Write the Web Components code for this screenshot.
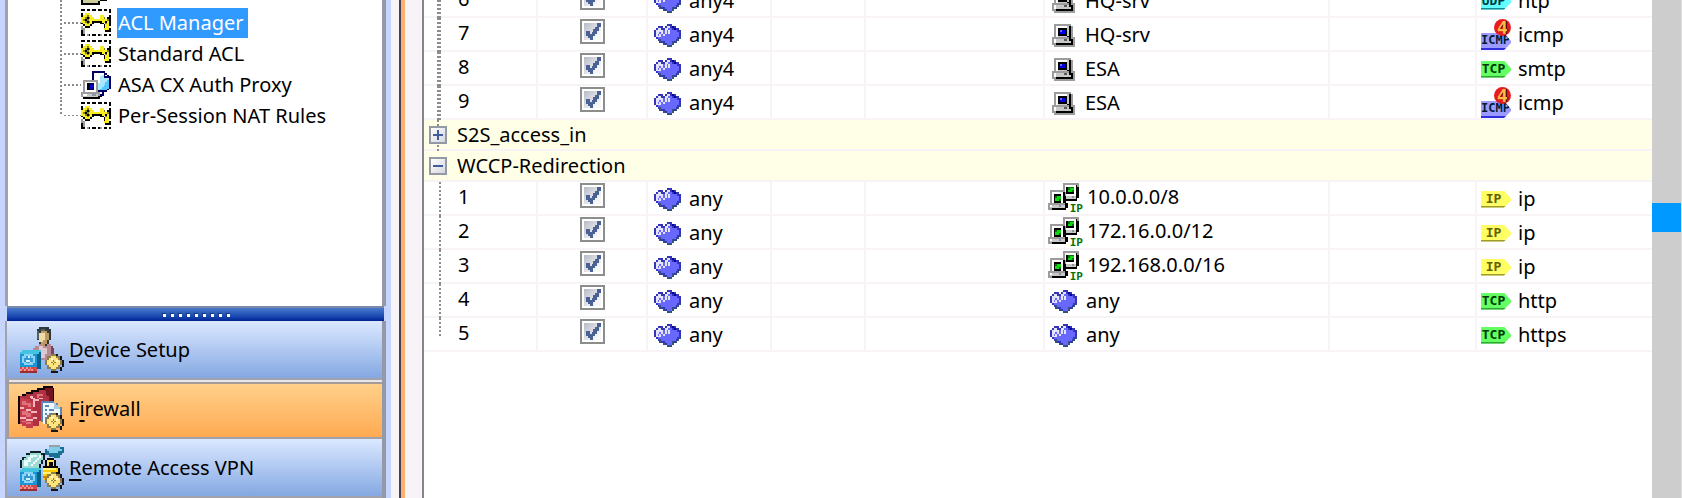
<!DOCTYPE html>
<html lang="en">
<head>
<meta charset="utf-8">
<title>ACL Manager</title>
<style>
  html, body {
    margin: 0;
    height: 100%;
  }

  body {
    overflow: hidden;
    background: #f7f3f7;
    color: #000;
    font-family: "Noto Sans", "DejaVu Sans", sans-serif;
    font-size: 20px;
    line-height: 24px;
  }
</style>
</head>
<body>
<asdm-window>
  <nav-tree slot="tree">
    <tree-item icon="pages"></tree-item>
    <tree-item icon="key" selected>ACL Manager</tree-item>
    <tree-item icon="key">Standard ACL</tree-item>
    <tree-item icon="proxy">ASA CX Auth Proxy</tree-item>
    <tree-item icon="key" last>Per-Session NAT Rules</tree-item>
  </nav-tree>
  <nav-button slot="nav" icon="device"><u>D</u>evice Setup</nav-button>
  <nav-button slot="nav" icon="firewall" active>F<u>i</u>rewall</nav-button>
  <nav-button slot="nav" icon="vpn"><u>R</u>emote Access VPN</nav-button>
  <acl-table slot="main"></acl-table>
  <scroll-track slot="main"></scroll-track>
</asdm-window>

<script>
// Small icons are kept as pixel maps, one character per pixel.
const PALETTE = {
  k: '#000000', w: '#ffffff', g: '#9c9c9c', s: '#c8c8c8', d: '#5a5a5a',
  y: '#f7ee21', o: '#8a8420', b: '#3434b8', B: '#0000a0', p: '#6868ff',
  l: '#e4e4ff', t: '#31527b', n: '#0000e8', v: '#000063', c: '#a8e8ff',
  C: '#50c8ff', G: '#10d810', e: '#087008', i: '#cecb9c', m: '#8c96a0'
};

const PIXELS = {
  cloud: {
    width: 27, height: 23, rows: [
      '.......bbb.....',
      '..bbb.bllbBb...',
      '.bllbbllppbBbb.',
      'bllllplplppppbb',
      'bllplplplpppppb',
      'blplplppppppppb',
      'blllppppppppppb',
      '.bpppppppppppbt',
      '..btppppppppbt.',
      '...tbbpppptbt..',
      '.....tbpppt....',
      '.......ttt.....'
    ]
  },
  host: {
    width: 23, height: 23, rows: [
      '.ggggggggg..',
      '.gwwwwwwskg.',
      '.gwkkkkkskg.',
      '.gwkpnnkskg.',
      '.gwknnnkskg.',
      '.gwkkkkkskg.',
      '.gwssssskkg.',
      'gggggggggkgg',
      'gwssssddskkg',
      'gwsssssssskg',
      'ggkkkkkkkkkg',
      '.ggggggggggg'
    ]
  },
  network: {
    width: 33, height: 29, rows: [
      '........ggggggggg.',
      '........gwwwwwwkg.',
      '........gwkeeewkk.',
      '........gwkeGGwkk.',
      '.ggggggggwkGGewkk.',
      '.gwwwwwwkgkkkkwkk.',
      '.gwkkkkwkgwwwwwkk.',
      '.gwkeGGwkksssmskk.',
      '.gwkGGGwkksssssk..',
      '.gwkGGewkkkkkkkk..',
      '.gwkkkkwkk........',
      'gggggggggkk.......',
      'gwssssmsskk.......',
      'gsssssssskk.......',
      'ggkkkkkkkk........',
      '..................'
    ]
  },
  key: {
    width: 30, height: 27, rows: [
      'kk.kk.kk.kk.kk.k',
      '...............k',
      'k.yyy...........',
      'kyyoyy....yy...k',
      'yyokoyy...yyo.kk',
      'yokoyyyyyyyyyyok',
      'yyokoykkkkkyykyk',
      'kyyoyyk...kk.oyk',
      '.kyyyk......kyyk',
      'g.kkk.......kyy.',
      'gg..........yyyk',
      'kg...........kkk',
      'kg..............',
      'kk.gk.kk.kg.kk.k'
    ]
  },
  proxy: {
    width: 30, height: 28, rows: [
      '......vvvvvvv...',
      '......vwwwwwvv..',
      '......vwwwwcvwv.',
      '......vwwwccvvvv',
      '......vwwwcccccv',
      '.ggggggggwccccCv',
      '.gwwwwwwgwcccCCv',
      '.gwkkvvwgccccCCv',
      '.gwkvnnwgcccCCCv',
      '.gwkvnvwgccCCCCv',
      '.gwkkvvwgcCCCCv.',
      '.gwwwwwwgvvvvv..',
      'gggggggggg.v....',
      'gwwsssmmsgvv....',
      'gsssssssskk.....',
      '.kkkkkkkkk......'
    ]
  },
  pages: {
    width: 30, height: 27, rows: [
      '................',
      '.kkkkkkkkkk.....',
      '.kiiiiiiiik.....',
      '.kiiiiiiiikkkk..',
      '.kiiiiiiiikwwk..',
      'kiiiiiiiiikwwk..',
      'kiiiiiiiiikwwk..',
      'kiiiiiiiiikwwk..',
      'kiiiiiiiiikwwk..',
      'kiiiiiiiiikwwk..',
      'kiiiiiiiiikwwk..',
      'kiiiiiiiiikkkk..',
      'kiiiiiiiik......',
      'kkkkkkkkkk......'
    ]
  }
};

const GEAR = `
  <path d="M18 14h3v1h2v2h1v4h-1v2h-2v1h-4v-1h5v-2h1v-4h-1v-2h-3z" fill="#17151a"/>
  <path d="M17 14h3v1h2v2h1v3h-1v2h-2v1h-3v-1h-2v-2h-1v-3h1v-2h2z" fill="#8c7d49"/>
  <path d="M17 15h3v1h1v1h1v3h-1v1h-1v1h-3v-1h-1v-1h-1v-3h1v-1h1z" fill="#ffe37b"/>
  <path d="M17 16h1v1h-1zM20 17h1v1h-1zM16 18h1v1h-1z" fill="#fffbd6"/>
  <path d="M18 17h1v1h1v1h-1v1h-1v-1h-1v-1h1z" fill="#8c7d39"/>
  <path d="M18 18h1v1h-1z" fill="#fff"/>`;

const APPLIANCE = `
  <path d="M2 12h10v10h-2v-8h1v-1H2z" fill="#08618c"/>
  <path d="M2 12h10v1h-1v1H1v-1h1z" fill="#42c3de"/>
  <path d="M1 14h9v7H1z" fill="#1896d6"/>
  <path d="M3 14h5v1h1v4H8v1H3v-1H2v-4h1z" fill="#8cd3f7"/>
  <path d="M4 15h3v1h1v2H7v1H4v-1H3v-2h1z" fill="#319ad6"/>
  <path d="M5 15h1v1H5zM4 17h2v1H4zM6 18h1v1H6z" fill="#d6f3ff"/>
  <path d="M1 21h9v3H1z" fill="#d6494a"/>
  <path d="M1 22h1v1H1zM3 22h1v1H3zM5 22h1v1H5zM7 22h1v1H7zM2 21h1v1H2zM4 21h1v1H4zM6 21h1v1H6z" fill="#ef9694"/>
  <path d="M1 23h9v1H1z" fill="#9c2c31"/>`;

const DRAWINGS = {
  device: `
    <path d="M11 0h5v1h1v6h-1v2h-1v1h-3V9h-1V7h-1V1h1z" fill="#31383a"/>
    <path d="M10 2h1v4h-1zM12 1h2v1h-2z" fill="#526163"/>
    <path d="M11 3h1V2h3v1h1v4h-1v2h-1v1h-2V8h-1z" fill="#bd9a63"/>
    <path d="M11 3h3v4h-1v1h-2z" fill="#efdba5"/>
    <path d="M9 10h2V9h1v1h3V9h2v1h1v6h-1v1h-5v-4H8v-2h1z" fill="#b58a94"/>
    <path d="M12 10h1v1h2v3h-1v2h-2v-4h-1v-2z" fill="#dec7ce"/>
    <path d="M17 10h1v1h1v4h-1v1h-1z" fill="#7b4552"/>`,
  firewall: `
    <path d="M0 5h2V4h2V3h3V2h3V1h3V0h5v1h1v15h-2v1h-3v1h-3v2h-2v1H7v1H4v-1H2v-1H0z" fill="#100408"/>
    <path d="M1 5h3V4h4V3h3V2h3V1h4v16h-3v1h-4v3H8v1H4v-1H2v-1H1z" fill="#ad3142"/>
    <path d="M1 6h2v1h3v1h2v14H4v-1H2v-1H1z" fill="#c63c4a"/>
    <path d="M14 1h4v8h-2V5h-1z" fill="#731420"/>
    <path d="M2 8h2v1h3v2H5v-1H2zM2 13h3v1h2v2H4v-1H2zM2 18h2v1h3v1H4v-1H2zM10 4h3v1h-2v1h-1z" fill="#de717b"/>
    <path d="M1 11h2v1h4v1h3v1H7v-1H4v-1H1zM1 16h3v1h4v-1h2v1H8v1H4v-1H1zM6 5h2v1h1v1h2V6h2v1h-2v1H9v3H8V7H7V6H6z" fill="#f7b6bd"/>
    <path d="M12 8h7v1h2v2h2v8H12z" fill="#5a86b5"/>
    <path d="M13 9h6v1h1v2h2v8h-9z" fill="#eff7ff"/>
    <path d="M19 9h1v1h1v1h1v1h-3z" fill="#a5cbe7"/>
    <path d="M14 10h2v1h-2zM14 12h1v1h-1zM16 12h3v1h-3zM14 14h1v1h-1zM16 14h3v1h-3zM14 16h1v1h-1z" fill="#5a86b5"/>`,
  vpn: `
    <path d="M16 0h6v1h2v3h-1v1h-1v2h-3V6h-3V5h-2V2h2z" fill="#187194"/>
    <path d="M16 1h6v1h1v1h-2v1h-5V3h-1V2h1z" fill="#84cbe7"/>
    <path d="M16 0h6v1h-6z" fill="#94a2a5"/>
    <path d="M6 3h6v1h2v4h-1v2h-1v2H1V8h1V6h2V4h2z" fill="#102028"/>
    <path d="M6 4h6v1h1v3h-1v2h-1v2H2V8h1V7h1V5h2z" fill="#9cdbd6"/>
    <path d="M6 5h4v1H8v1H7v2H5v2H3V8h2V6h1z" fill="#e7ffff"/>
    <path d="M11 5h1v2h-1v1h-1v1H9v1H8v1H7v-1h1V9h1V8h1V7h1z" fill="#fff"/>
    <path d="M15 7h4v1h1v3h1v1h1v6h-9v-7h1V8h1z" fill="#080800"/>
    <path d="M15 8h4v3h-1V9h-2v2h-1z" fill="#ffe35a"/>
    <path d="M13 12h8v6h-8z" fill="#ffcb00"/>
    <path d="M13 12h7v1h-7zM13 14h7v1h-7z" fill="#fff37b"/>
    <path d="M13 16h8v1h-8z" fill="#c68600"/>`
};

function pixelIcon(name) {
  const { width, height, rows } = PIXELS[name];
  let rects = '';
  rows.forEach((row, y) => {
    // runs of one colour become one rect
    for (const run of row.matchAll(/([^.])\1*/g)) {
      rects += `<rect x="${run.index}" y="${y}" width="${run[0].length}" height="1" fill="${PALETTE[run[1]]}"/>`;
    }
  });
  return `<svg width="${width}" height="${height}" viewBox="0 0 ${rows[0].length} ${rows.length}" preserveAspectRatio="none" shape-rendering="crispEdges" aria-hidden="true">${rects}</svg>`;
}

function largeIcon(name) {
  const front = name === 'firewall' ? '' : APPLIANCE;
  return `<svg width="46" height="46" viewBox="0 0 24 24" shape-rendering="crispEdges" aria-hidden="true">${DRAWINGS[name]}${front}${GEAR}</svg>`;
}

class PixelIcon extends HTMLElement {
  constructor() {
    super();
    this.attachShadow({ mode: 'open' });
  }

  connectedCallback() {
    const name = this.getAttribute('name');
    this.shadowRoot.innerHTML = `
      <style>
        :host { display: inline-block; position: relative; flex: none; }
        svg { display: block; }
        span {
          position: absolute;
          right: -2px;
          bottom: -2px;
          color: #087008;
          font: bold 11px/11px "DejaVu Sans Mono", monospace;
        }
      </style>
      ${DRAWINGS[name] ? largeIcon(name) : pixelIcon(name)}
      ${name === 'network' ? '<span>IP</span>' : ''}
    `;
  }
}

class AsdmWindow extends HTMLElement {
  constructor() {
    super();
    this.attachShadow({ mode: 'open' });
    this.shadowRoot.innerHTML = `
      <style>
        :host { display: flex; height: 100vh; }
        .side {
          flex: 0 0 391px;
          box-sizing: border-box;
          display: flex;
          flex-direction: column;
          padding: 0 5px;
          background: #c5d5fd;
        }
        .tree {
          flex: 1;
          min-height: 0;
          overflow: hidden;
          background: #fff;
          border: solid #a2a2ad;
          border-width: 0 4px 0 3px;
          border-right-color: #9598a6;
        }
        .grip {
          flex: none;
          display: flex;
          justify-content: center;
          align-items: center;
          gap: 4px;
          margin: 0 2px;
          height: 13px;
          border-top: 2px solid #7b8ba5;
          background: linear-gradient(#4a79ce, #1c4cb2 60%, #0a30a0 88%, #00208c);
        }
        .grip i {
          width: 4px;
          height: 4px;
          box-sizing: border-box;
          background: #fff;
          border: solid #15397f;
          border-width: 1px 0 0 1px;
        }
        nav { flex: none; border: solid #a2a2ad; border-width: 0 4px 0 2px; border-right-color: #9598a6; }
        .divider {
          flex: 0 0 6px;
          margin: 0 17px 0 8px;
          box-sizing: border-box;
          border-left: 2px solid #4a3c5a;
          background: #f7b26b;
        }
        main {
          flex: 1;
          min-width: 0;
          display: flex;
          overflow: hidden;
          background: #fff;
          border-left: 2px solid #84868f;
        }
      </style>
      <div class="side">
        <div class="tree"><slot name="tree"></slot></div>
        <div class="grip">${'<i></i>'.repeat(9)}</div>
        <nav><slot name="nav"></slot></nav>
      </div>
      <div class="divider"></div>
      <main><slot name="main"></slot></main>
    `;
  }
}

class NavTree extends HTMLElement {
  constructor() {
    super();
    this.attachShadow({ mode: 'open' });
    this.shadowRoot.innerHTML = `
      <style>
        /* scrolled part way through a row */
        :host { display: block; margin-top: -24px; padding-left: 52px; }
      </style>
      <slot></slot>
    `;
  }
}

class TreeItem extends HTMLElement {
  constructor() {
    super();
    this.attachShadow({ mode: 'open' });
  }

  connectedCallback() {
    this.shadowRoot.innerHTML = `
      <style>
        :host { display: flex; align-items: center; height: 31px; }
        .branch {
          align-self: stretch;
          width: 21px;
          background:
            repeating-linear-gradient(#8c8c8c 0 2px, #fff 2px 4px) 0 0 / 2px 100% no-repeat,
            repeating-linear-gradient(90deg, #8c8c8c 0 2px, #fff 2px 4px) 0 15px / 100% 2px no-repeat;
        }
        :host([last]) .branch { height: 16px; align-self: flex-start; }
        a {
          margin-left: 6px;
          padding: 3px 5px 3px 1px;
          color: inherit;
          text-decoration: none;
        }
        :host([selected]) a { background: #319aff; color: #fff; }
        pixel-icon { width: 30px; }
      </style>
      <span class="branch"></span>
      <pixel-icon name="${this.getAttribute('icon')}"></pixel-icon>
      ${this.textContent ? '<a href="#"><slot></slot></a>' : ''}
    `;
  }
}

class NavButton extends HTMLElement {
  constructor() {
    super();
    this.attachShadow({ mode: 'open' });
  }

  connectedCallback() {
    this.shadowRoot.innerHTML = `
      <style>
        :host { display: block; }
        button {
          display: flex;
          align-items: center;
          gap: 5px;
          width: 100%;
          height: 59px;
          margin: 0;
          padding: 0 11px;
          border: 0;
          border-bottom: 2px solid #a2a2ad;
          background: linear-gradient(#dbe8ff, #84a8e2);
          color: inherit;
          font: inherit;
          text-align: left;
        }
        :host([active]) button {
          padding-left: 9px;
          border-left: 2px solid #a59a94;
          background: linear-gradient(#e6e6ef 0 2px, #a59a94 2px 4px, #ffd08a 4px, #ffaa52);
        }
        ::slotted(u) {
          text-decoration-thickness: 2px;
          text-underline-offset: 4px;
          text-decoration-skip-ink: none;
        }
      </style>
      <button type="button">
        <pixel-icon name="${this.getAttribute('icon')}"></pixel-icon>
        <span><slot></slot></span>
      </button>
    `;
  }
}

class RuleCheck extends HTMLElement {
  constructor() {
    super();
    this.attachShadow({ mode: 'open' });
  }

  connectedCallback() {
    this.shadowRoot.innerHTML = `
      <style>
        :host { display: inline-grid; width: 25px; height: 25px; }
        input, svg { grid-area: 1 / 1; margin: 0; }
        input {
          appearance: none;
          width: 25px;
          height: 25px;
          border: 2px solid #8c8e8c;
          padding: 2px;
          background: linear-gradient(135deg, #b5bac6, #f7f7f7 80%) content-box #fff;
        }
        svg { place-self: center; pointer-events: none; visibility: hidden; }
        input:checked + svg { visibility: visible; }
      </style>
      <input type="checkbox" checked aria-label="${this.getAttribute('label')}">
      <svg width="17" height="17" viewBox="0 0 9 9" shape-rendering="crispEdges" aria-hidden="true">
        <path d="M7 0h2v2H8v2H7v2H6v1H5v2H3V8H2V7H1V4h2v2h1V5h1V3h1V2h1z" fill="#4a6194"/>
      </svg>
    `;
  }
}

class ServiceBadge extends HTMLElement {
  constructor() {
    super();
    this.attachShadow({ mode: 'open' });
  }

  connectedCallback() {
    const kind = this.getAttribute('kind');
    const colors = {
      TCP: ['#63ff63', '#31a631', '#003800'],
      UDP: ['#63ffff', '#108a94', '#003c42'],
      IP: ['#ffff63', '#9c9a31', '#636100'],
      ICMP: ['#9c9aff', '#3130de', '#001c31']
    };
    const [fill, edge, ink] = colors[kind];
    this.shadowRoot.innerHTML = `
      <style>
        :host {
          display: inline-block;
          position: relative;
          flex: none;
          width: 30px;
          color: ${ink};
          font: bold 13px/15px "DejaVu Sans Mono", monospace;
        }
        .tag {
          height: 15px;
          padding-right: 5px;
          border-bottom: 2px solid ${edge};
          background: ${fill};
          clip-path: polygon(0 0, 23px 0, 30px 8px, 30px 10px, 23px 100%, 0 100%);
          text-align: center;
        }
        .wide { padding: 0; font-size: 12px; text-align: left; }
        .version {
          position: absolute;
          right: 0;
          bottom: 14px;
          width: 17px;
          height: 17px;
          border-radius: 50%;
          background: #e71c21;
          color: #ffba42;
          font-size: 18px;
          line-height: 17px;
          text-align: center;
          text-shadow: 1px 0 #300;
        }
      </style>
      <div class="tag ${kind === 'ICMP' ? 'wide' : ''}">${kind}</div>
      ${kind === 'ICMP' ? '<div class="version">4</div>' : ''}
    `;
  }
}

const ACLS = [
  {
    open: true, partial: true,
    rules: [
      [6, 'any4', 'host', 'HQ-srv', 'UDP', 'ntp'],
      [7, 'any4', 'host', 'HQ-srv', 'ICMP', 'icmp'],
      [8, 'any4', 'host', 'ESA', 'TCP', 'smtp'],
      [9, 'any4', 'host', 'ESA', 'ICMP', 'icmp']
    ]
  },
  { name: 'S2S_access_in', open: false, rules: [] },
  {
    name: 'WCCP-Redirection', open: true,
    rules: [
      [1, 'any', 'network', '10.0.0.0/8', 'IP', 'ip'],
      [2, 'any', 'network', '172.16.0.0/12', 'IP', 'ip'],
      [3, 'any', 'network', '192.168.0.0/16', 'IP', 'ip'],
      [4, 'any', 'cloud', 'any', 'TCP', 'http'],
      [5, 'any', 'cloud', 'any', 'TCP', 'https']
    ]
  }
];

class AclTable extends HTMLElement {
  constructor() {
    super();
    this.attachShadow({ mode: 'open' });
    this.shadowRoot.innerHTML = `
      <style>
        :host { display: block; flex: 1; min-width: 0; }
        table {
          width: 100%;
          margin-top: -16px;
          border-spacing: 0;
          table-layout: fixed;
        }
        td, th { padding: 0; text-align: left; font-weight: normal; }
        td { height: 32px; border: solid #f7f3f7; border-width: 0 2px 2px 0; vertical-align: top; }
        td:last-child { border-right: 0; }
        td.no { position: relative; padding-left: 34px; line-height: 30px; }
        td.no::before {
          content: "";
          position: absolute;
          left: 15px;
          top: 0;
          bottom: -2px;
          width: 2px;
          background: repeating-linear-gradient(#8c8c8c 0 2px, transparent 2px 4px);
        }
        .partial td.no::before { left: 13px; width: 4px; }
        .last td.no::before { bottom: 14px; }
        td.check { padding-top: 1px; height: 31px; text-align: center; }
        rule-check { vertical-align: top; }
        .cell { display: flex; align-items: center; box-sizing: border-box; height: 32px; padding-top: 2px; }
        .source { padding-left: 6px; gap: 8px; }
        .host { padding-left: 7px; gap: 10px; }
        .network { padding-left: 3px; gap: 6px; height: 30px; padding-top: 0; }
        .cloud { padding-left: 5px; gap: 9px; }
        .service { padding-left: 4px; gap: 7px; }
        .ICMP service-badge { align-self: flex-end; }
        th {
          position: relative;
          height: 29px;
          padding-left: 33px;
          border-bottom: 2px solid #f7f3f7;
          background: #ffffe7;
        }
        th button {
          position: absolute;
          left: 5px;
          top: 6px;
          width: 18px;
          height: 18px;
          padding: 0;
          border: 2px solid #949aa5;
          background:
            linear-gradient(#425d9c, #425d9c) center / 10px 2px no-repeat,
            var(--stem, none) center / 2px 10px no-repeat,
            linear-gradient(135deg, #fff, #d6d7de);
        }
        .closed button { --stem: linear-gradient(#425d9c, #425d9c); }
        .closed th::before, .closed th::after {
          content: "";
          position: absolute;
          left: 13px;
          width: 2px;
          height: 6px;
          background: repeating-linear-gradient(#8c8c8c 0 2px, transparent 2px 4px);
        }
        .closed th::before { top: 0; }
        .closed th::after { top: 25px; height: 10px; }
      </style>
      <table aria-label="Access rules">
        <colgroup>
          <col style="width: 114px"><col style="width: 110px"><col style="width: 124px"><col style="width: 94px">
          <col style="width: 179px"><col style="width: 285px"><col style="width: 147px"><col>
        </colgroup>
        <tbody></tbody>
      </table>
    `;
    this.shadowRoot.querySelector('tbody').innerHTML = ACLS.map(acl => this.group(acl)).join('');
  }

  group(acl) {
    const header = acl.name ? `
      <tr class="${acl.open ? 'open' : 'closed'}">
        <th colspan="8"><button type="button" aria-label="Toggle ${acl.name}"></button>${acl.name}</th>
      </tr>` : '';
    const rows = acl.rules.map((rule, i) => {
      const last = !acl.partial && i === acl.rules.length - 1;
      return this.row(rule, `${acl.partial ? 'partial' : ''} ${last ? 'last' : ''}`);
    });
    return header + rows.join('');
  }

  row([no, source, icon, destination, kind, service], classes) {
    return `
      <tr class="${classes}">
        <td class="no">${no}</td>
        <td class="check"><rule-check label="Enable rule ${no}"></rule-check></td>
        <td><div class="cell source"><pixel-icon name="cloud"></pixel-icon>${source}</div></td>
        <td></td>
        <td></td>
        <td><div class="cell ${icon}"><pixel-icon name="${icon}"></pixel-icon>${destination}</div></td>
        <td></td>
        <td><div class="cell service ${kind}"><service-badge kind="${kind}"></service-badge>${service}</div></td>
      </tr>`;
  }
}

class ScrollTrack extends HTMLElement {
  constructor() {
    super();
    this.attachShadow({ mode: 'open' });
    this.shadowRoot.innerHTML = `
      <style>
        :host {
          display: grid;
          flex: 0 0 30px;
          box-sizing: border-box;
          grid-template-rows: 203fr 29px 266fr;
          border-right: 1px solid #dedede;
          background: #cdcdcd;
        }
        div { grid-row: 2; background: #0099ff; }
      </style>
      <div></div>
    `;
  }
}

customElements.define('pixel-icon', PixelIcon);
customElements.define('asdm-window', AsdmWindow);
customElements.define('nav-tree', NavTree);
customElements.define('tree-item', TreeItem);
customElements.define('nav-button', NavButton);
customElements.define('rule-check', RuleCheck);
customElements.define('service-badge', ServiceBadge);
customElements.define('acl-table', AclTable);
customElements.define('scroll-track', ScrollTrack);
</script>
</body>
</html>
